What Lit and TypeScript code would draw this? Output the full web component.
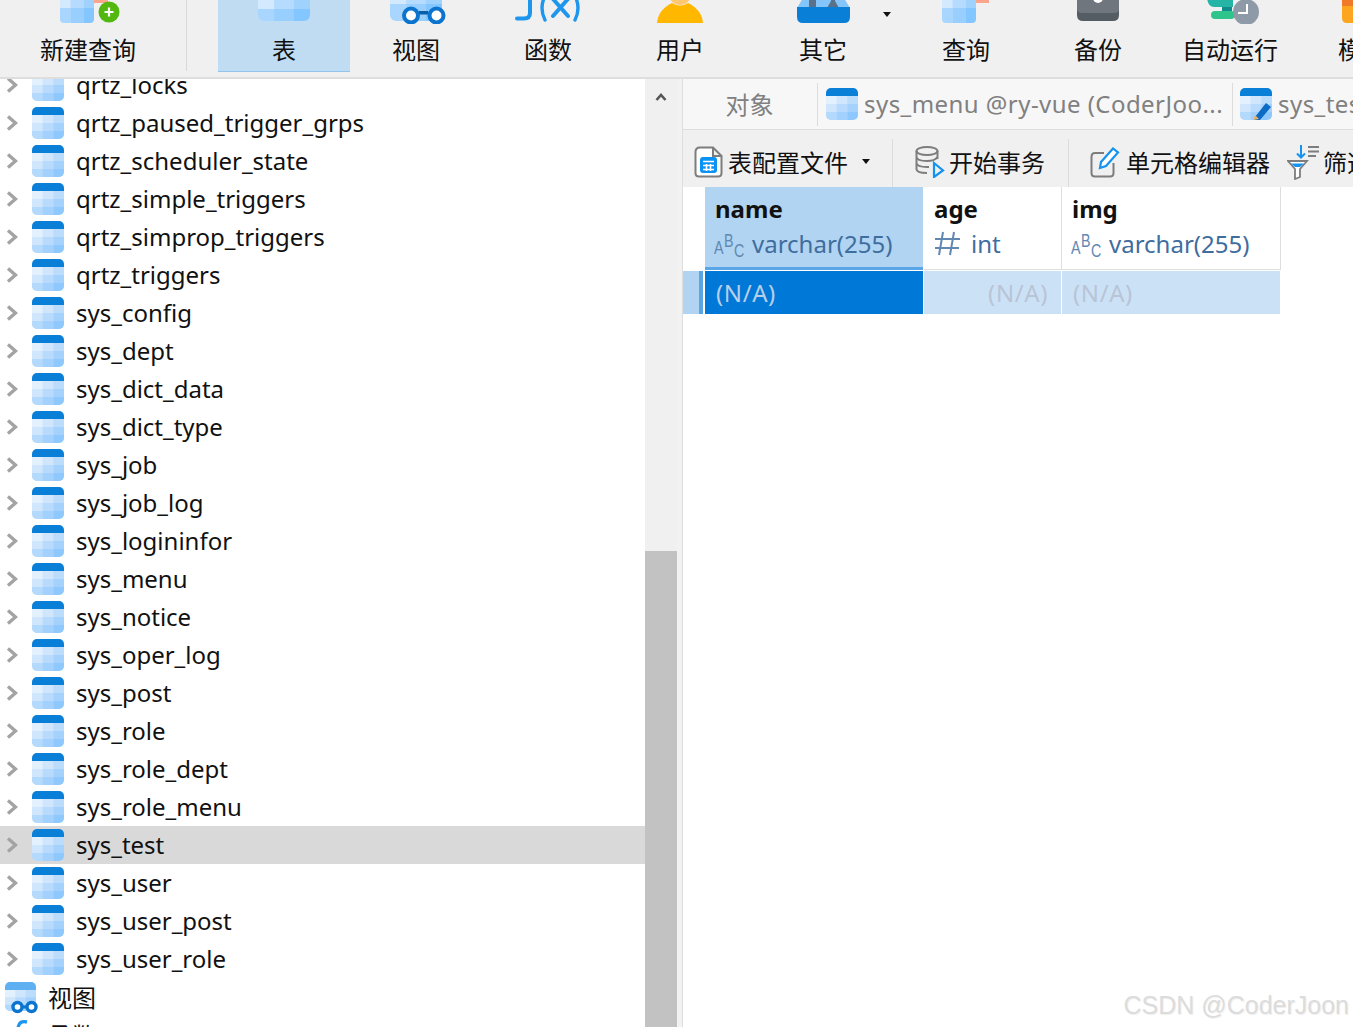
import { LitElement, html, css, svg } from "lit";
import { customElement } from "lit/decorators.js";

const cellColors = ["#e3f0fd", "#cfe6fc", "#bcdcfc", "#cfe6fc", "#b8dbfd", "#a5d2fd", "#b3d9fd", "#a3d1fd", "#8fc8fd"];

const tableCells = (x: number, y: number, w: number, h: number) => {
  const cw = w / 3, ch = h / 3;
  return cellColors.map((c, i) => svg`<rect x=${x + (i % 3) * cw} y=${y + Math.floor(i / 3) * ch} width=${cw + 0.2} height=${ch + 0.2} fill=${c}/>`);
};

let uid = 0;
const tableIcon = (pencil = false) => {
  const id = `c${uid++}`;
  return html`<svg class="ti" width="32" height="32" viewBox="0 0 32 32">
    <defs><clipPath id=${id}><rect width="32" height="32" rx="5"/></clipPath></defs>
    <g clip-path="url(#${id})">
      <rect width="32" height="32" fill="#cfe6fc"/>
      ${tableCells(0, 8, 32, 24)}
      <rect width="32" height="8" fill="#0a7fd8"/>
    </g>
    ${pencil ? svg`<path d="M15 29 L26 15 L31 19 L20 32 L15 32Z" fill="#0a6cc4"/><path d="M13 32 L15 27 L19 31Z" fill="#e8b06a"/>` : ""}
  </svg>`;
};

const viewIcon = () => html`<svg class="ti root-ic" width="36" height="34" viewBox="0 0 36 34">
  <defs><clipPath id="vc"><rect width="31" height="29" rx="5"/></clipPath></defs>
  <g clip-path="url(#vc)"><rect width="31" height="29" fill="#cfe6fc"/>${tableCells(0, 8, 31, 22)}<rect width="31" height="8" fill="#5eb0f0"/></g>
  <circle cx="12.500" cy="25" r="4.500" fill="#fff" stroke="#0a74cf" stroke-width="3.400"/><circle cx="26.500" cy="25" r="4.500" fill="#fff" stroke="#0a74cf" stroke-width="3.400"/>
  <rect x="16" y="23.500" width="7" height="3" fill="#0a74cf"/>
</svg>`;

const twoRow = ["#d3e9fe", "#b5dbfe", "#a0d2fe", "#a9d6fe", "#98cffe", "#84c6ff"];
const block = (id: string, x: number, w: number, split: number, bottom: number, rx = 6) => {
  const a = x + w * 0.31, b = x + w * 0.69;
  const xs = [x, a, b, x + w];
  const ys = [-6, split, bottom];
  return svg`<defs><clipPath id=${id}><rect x=${x} y="-12" width=${w} height=${bottom + 12} rx=${rx}/></clipPath></defs>
    <g clip-path="url(#${id})">${twoRow.map((c, i) => {
      const col = i % 3, r = Math.floor(i / 3);
      return svg`<rect x=${xs[col]} y=${ys[r]} width=${xs[col + 1] - xs[col] + 0.2} height=${ys[r + 1] - ys[r] + 0.2} fill=${c}/>`;
    })}</g>`;
};

const toolIcons: Record<string, unknown> = {
  newq: svg`<rect x="6" y="-2" width="14" height="5" fill="#fba58c"/>
    ${block("t-n", -28, 34, 8, 23, 4)}
    <circle cx="21" cy="12" r="10.500" fill="#52b810"/><path d="M21 7.500v9M16.500 12h9" stroke="#fff" stroke-width="2.200"/>`,
  table: block("t-t", -26, 52, 9, 21),
  view: svg`${block("t-v", -26, 52, 4, 21)}
    <rect x="3" y="11" width="9" height="3.500" fill="#0a5ea8"/>
    <circle cx="-5" cy="15.500" r="7" fill="#fff" stroke="#0a74cf" stroke-width="4"/><circle cx="20.500" cy="15.500" r="7" fill="#fff" stroke="#0a74cf" stroke-width="4"/>`,
  func: svg`<path d="M-18 -4 V13 Q-18 18.500 -24 18.500 H-31" fill="none" stroke="#1e96ee" stroke-width="4" stroke-linecap="round"/>
    <path d="M-3 -4 Q-9 8 -3 20" fill="none" stroke="#1e96ee" stroke-width="3.400" stroke-linecap="round"/>
    <path d="M5 -1 L20 16 M20 -1 L5 16" stroke="#1e96ee" stroke-width="4" stroke-linecap="round"/>
    <path d="M27 -4 Q33 8 27 20" fill="none" stroke="#1e96ee" stroke-width="3.400" stroke-linecap="round"/>`,
  user: svg`<path d="M-23 23 Q-22 10 -8 3 Q0 8 8 3 Q22 10 23 23Z" fill="#ffb700"/><circle cx="0" cy="-6" r="11" fill="#ffc870"/>`,
  other: svg`<path d="M-20 -2 H21 L27 8 H-26Z" fill="#86c5fa"/>
    <rect x="-14" y="-2" width="7" height="10" fill="#5a7189"/><path d="M8 -2 H12 V1 L16 8 H4 L8 1Z" fill="#5a7189"/>
    <path d="M-26 7 H27 V17 Q27 23 21 23 H-20 Q-26 23 -26 17Z" fill="#0a7fd8"/>`,
  query: svg`<rect x="10" y="-2" width="13" height="5" fill="#fba58c"/>${block("t-q", -24, 34, 8, 23, 4)}`,
  backup: svg`<path d="M-21 -2 H21 V15 Q21 21 15 21 H-15 Q-21 21 -21 15Z" fill="#545c64"/><path d="M-21 -2 H21 V9 Q21 13 16 13 H-16 Q-21 13 -21 9Z" fill="#6f767d"/><circle cx="0" cy="-2" r="5" fill="#fff"/>`,
  auto: svg`<path d="M-23 -2 H3 V7 H-16 Q-22 7 -23 -2Z" fill="#25b5a7"/><rect x="-8" y="7" width="10" height="4" fill="#0f8c8c"/><rect x="-19" y="11" width="24" height="8" rx="4" fill="#30c48d"/>
    <circle cx="16" cy="12" r="13" fill="#8e9aa7"/><path d="M17 4 V13 H8" fill="none" stroke="#fff" stroke-width="2"/>`,
  model: svg`<path d="M-20 2 H0 V23 H-15 Q-20 23 -20 18Z" fill="#fda51f"/><rect x="-20" y="-2" width="20" height="8" fill="#f07a2a"/>`,
};

const tools = [
  { k: "newq", t: "新建查询", cls: "w-new" },
  { k: "table", t: "表", cls: "on" },
  { k: "view", t: "视图", cls: "" },
  { k: "func", t: "函数", cls: "" },
  { k: "user", t: "用户", cls: "" },
  { k: "other", t: "其它", cls: "w-other", drop: true },
  { k: "query", t: "查询", cls: "" },
  { k: "backup", t: "备份", cls: "" },
  { k: "auto", t: "自动运行", cls: "" },
  { k: "model", t: "模型", cls: "" },
];

const rows = [
  "qrtz_locks", "qrtz_paused_trigger_grps", "qrtz_scheduler_state", "qrtz_simple_triggers", "qrtz_simprop_triggers",
  "qrtz_triggers", "sys_config", "sys_dept", "sys_dict_data", "sys_dict_type", "sys_job", "sys_job_log", "sys_logininfor",
  "sys_menu", "sys_notice", "sys_oper_log", "sys_post", "sys_role", "sys_role_dept", "sys_role_menu", "sys_test",
  "sys_user", "sys_user_post", "sys_user_role",
];

@customElement("app-root")
export class AppRoot extends LitElement {
  static styles = css`
    :host { display: block; width: 1353px; height: 1027px; overflow: hidden; background: #fff; position: relative;
      font-family: "Noto Sans", "Noto Sans CJK SC", sans-serif; font-size: 24px; color: #111; }
    .top { height: 77px; background: #f0f0f0; border-bottom: 2px solid #dedede; display: flex; overflow: hidden; }
    .tool { width: 132px; flex: none; height: 72px; display: flex; flex-direction: column; align-items: center; position: relative; box-sizing: border-box; }
    .tool svg { display: block; flex: none; }
    .tool .lbl { margin-top: 8px; line-height: 34px; white-space: nowrap; font-family: "Noto Sans CJK SC", sans-serif; }
    .tool.w-new { width: 176px; }
    .tool.w-other { width: 154px; }
    .tool.on { background: #c0dcf2; border-bottom: 1px solid #90c4ef; }
    .sep { width: 1px; height: 71px; background: #d9d9d9; margin: 0 31px 0 10px; flex: none; }
    .drop { position: absolute; left: 137px; top: 12px; width: 0; height: 0; border: 4.500px solid transparent; border-top: 5px solid #111; border-bottom: 0; }
    .main { display: flex; height: 948px; }
    .side { width: 645px; flex: none; overflow: hidden; }
    .list { margin-top: -13px; }
    .row { height: 38px; display: flex; align-items: center; }
    .row.sel { background: #d9d9d9; }
    .chev { width: 12px; height: 18px; margin: 0 14px 0 6px; flex: none; }
    .ti { flex: none; display: block; }
    .root-ic { margin-top: 4px; }
    .name { margin-left: 12px; white-space: nowrap; line-height: 38px; }
    .row.root { padding-left: 5px; }
    .row.root .name { margin-left: 7px; font-family: "Noto Sans CJK SC", sans-serif; }
    .scroll { width: 32px; flex: none; background: #f0f0f0; display: flex; flex-direction: column; align-items: stretch; }
    .scroll svg { margin: 13px 0 0 10px; display: block; }
    .thumb { margin-top: 449px; flex: 1; background: #c2c2c2; }
    .gutter { width: 5px; flex: none; background: #f2f2f2; border-right: 1px solid #dedede; }
    .pane { flex: 1; min-width: 0; display: flex; flex-direction: column; overflow: hidden; }
    .tabs { height: 50px; background: #f7f7f7; border-bottom: 1px solid #dcdcdc; display: flex; align-items: center; flex: none; }
    .tab { height: 43px; display: flex; align-items: center; border-right: 1px solid #dcdcdc; color: #808080; flex: none; white-space: nowrap; overflow: hidden; box-sizing: border-box; }
    .tab span { margin-top: -2px; }
    .tab.obj { width: 135px; justify-content: center; font-family: "Noto Sans CJK SC", sans-serif; padding: 0 1px 2px 0; }
    .tab.menu { width: 415px; padding-left: 8px; gap: 6px; letter-spacing: 0.45px; }
    .tab.test { padding-left: 7px; gap: 6px; border: 0; letter-spacing: 0.45px; }
    .bar { height: 57px; background: #f0f0f0; display: flex; align-items: flex-end; flex: none; white-space: nowrap; font-family: "Noto Sans CJK SC", sans-serif; }
    .bi { height: 48px; display: flex; align-items: center; flex: none; box-sizing: border-box; position: relative; padding-bottom: 3px; }
    .bi span { margin-top: -1px; }
    .b1 { width: 210px; padding-left: 11px; gap: 5px; border-right: 1px solid #dcdcdc; }
    .b2 { width: 176px; padding-left: 22px; gap: 4px; border-right: 1px solid #dcdcdc; }
    .b3 { width: 218px; padding-left: 21px; gap: 5px; }
    .b4 { padding-left: 0; gap: 3px; }
    .b1 i { width: 0; height: 0; border: 4.500px solid transparent; border-top: 5px solid #111; border-bottom: 0; margin-left: 9px; }
    .grid { display: grid; grid-template-columns: 21px 218px 137px 218px; column-gap: 1px; align-content: start; flex: none; background: #fff; width: 597px; }
    .hd { height: 83px; box-sizing: border-box; padding: 4px 0 0 10px; border-bottom: 1px solid #dedede; position: relative; }
    .hd.blank { background: #fff; border-bottom-color: transparent; }
    .hd.sel { background: #b0d4f1; border-bottom: 3px solid #5aa5e6; }
    .hd .n { font-weight: 700; line-height: 36px; font-family: "Noto Sans", sans-serif; }
    .hd .ty { display: flex; align-items: center; height: 32px; color: #3f6d9e; gap: 8px; }
    .hd.sel .ty, .hd.im .ty { margin-left: -1px; }
    .int { margin-left: 2px; }
    .abc { display: flex; width: 30px; color: #6288b2; font-size: 19px; line-height: 20px; letter-spacing: 0; font-family: "Liberation Sans", sans-serif; flex: none; }
    .abc span { display: block; width: 10px; transform: scaleX(0.75); transform-origin: 0 0; }
    .abc span:nth-child(1) { margin-top: 12px; }
    .abc span:nth-child(2) { margin-top: 5px; }
    .abc span:nth-child(3) { margin-top: 15px; }
    .vline { box-shadow: 1px 0 0 #dedede; }
    .cell { height: 43px; margin-top: 1px; box-sizing: border-box; padding: 0 11px; line-height: 43px; background: #cbe2f6; color: #b9c4d6; letter-spacing: 0.6px; }
    .cell.s { background: #0078d7; color: #b7cfe8; }
    .cell.r { text-align: right; padding-right: 13px; }
    .rh { height: 43px; margin-top: 1px; background: linear-gradient(to right, #b0d4f1 16px, #5aa5e6 16px, #5aa5e6 20px, #fff 20px); }
    .mark { position: absolute; right: 4px; bottom: 8px; font-family: "Liberation Sans", sans-serif; font-size: 25px; color: #dcdcdc; text-shadow: 1px 1px 1px #eee; line-height: 28px; }
  `;

  render() {
    uid = 0;
    return html`
      <div class="top">
        ${tools.map((t) => html`
          <div class="tool ${t.cls}">
            <svg width="80" height="24" viewBox="-40 0 80 24">${toolIcons[t.k]}</svg>
            <div class="lbl">${t.t}</div>
            ${t.drop ? html`<span class="drop"></span>` : ""}
          </div>
          ${t.k === "newq" ? html`<div class="sep"></div>` : ""}
        `)}
      </div>
      <div class="main">
        <div class="side">
          <div class="list">
            ${rows.map((r) => html`<div class="row ${r === "sys_test" ? "sel" : ""}">
              <svg class="chev" viewBox="0 0 12 18"><path d="M2 2.500 L9.500 9 L2 15.500" fill="none" stroke="#a3a3a3" stroke-width="3.400"/></svg>
              ${tableIcon()}
              <span class="name">${r}</span>
            </div>`)}
            <div class="row root">${viewIcon()}<span class="name">视图</span></div>
            <div class="row root">
              <svg class="ti" width="36" height="34" viewBox="0 0 36 34"><path d="M22 4 Q14 2 13 10 V30" fill="none" stroke="#1e96ee" stroke-width="3.400"/></svg>
              <span class="name">函数</span>
            </div>
          </div>
        </div>
        <div class="scroll">
          <svg width="12" height="10" viewBox="0 0 12 10"><path d="M1.500 8 L6 3 L10.500 8" fill="none" stroke="#555" stroke-width="2.600"/></svg>
          <div class="thumb"></div>
        </div>
        <div class="gutter"></div>
        <div class="pane">
          <div class="tabs">
            <div class="tab obj">对象</div>
            <div class="tab menu">${tableIcon()}<span>sys_menu @ry-vue (CoderJoo...</span></div>
            <div class="tab test">${tableIcon(true)}<span>sys_test</span></div>
          </div>
          <div class="bar">
            <div class="bi b1">
              <svg width="29" height="32" viewBox="0 0 29 32"><path d="M6 1.500 H19 L27.500 10 V27 Q27.500 30.500 24 30.500 H5 Q1.500 30.500 1.500 27 V6 Q1.500 1.500 6 1.500Z M19 1.500 V10 H27.500" fill="#fff" stroke="#7d7d7d" stroke-width="2"/><rect x="6" y="11" width="17" height="16" rx="3" fill="#0a93f5"/><path d="M9 15.500h11M9 19.500h11M9 23.500h11M12.500 18v7M16.500 18v7" stroke="#fff" stroke-width="1.600"/></svg>
              <span>表配置文件</span><i></i>
            </div>
            <div class="bi b2">
              <svg width="30" height="32" viewBox="0 0 30 32"><g fill="none" stroke="#7d7d7d" stroke-width="2"><ellipse cx="12" cy="5" rx="10.500" ry="4"/><path d="M1.500 5 V23 Q1.500 27 12 27 M22.500 5 V13 M1.500 11 Q2 15 12 15 Q20 15 22.500 11 M1.500 17 Q2 21 12 21 H14"/></g><path d="M19 17 L28 24.500 L19 31Z" fill="none" stroke="#1593ee" stroke-width="2.200"/></svg>
              <span>开始事务</span>
            </div>
            <div class="bi b3">
              <svg width="31" height="32" viewBox="0 0 31 32"><path d="M14 7 H5 Q1.500 7 1.500 11 V27 Q1.500 30.500 5 30.500 H20 Q23.500 30.500 23.500 27 V17" fill="none" stroke="#7d7d7d" stroke-width="2"/><path d="M11 16 L23 2.500 L28 6.500 L16 20 L10 22Z" fill="#fff" stroke="#1593ee" stroke-width="2.200"/></svg>
              <span>单元格编辑器</span>
            </div>
            <div class="bi b4">
              <svg width="33" height="36" viewBox="0 0 33 36"><path d="M14 1 V13 M10 9.500 L14 13.500 L18 9.500" fill="none" stroke="#1593ee" stroke-width="2"/><path d="M21 3 H32 M21 7.500 H32 M21 12 H29" stroke="#7d7d7d" stroke-width="1.800"/><path d="M1 17 H20 L13 25 V33 L8 35 V25Z" fill="#fff" stroke="#7d7d7d" stroke-width="1.800"/><path d="M4 19.500 H17 L13 23 H8Z" fill="#1593ee"/></svg>
              <span>筛选</span>
            </div>
          </div>
          <div class="grid">
            <div class="hd blank"></div>
            <div class="hd sel"><div class="n">name</div><div class="ty"><span class="abc"><span>A</span><span>B</span><span>C</span></span>varchar(255)</div></div>
            <div class="hd vline"><div class="n">age</div><div class="ty"><svg class="ti" width="27" height="26" viewBox="0 0 27 26"><path d="M9 2 L5 25 M20 2 L16 25 M1 9 H26 M1 18 H25" stroke="#6288b2" stroke-width="2" fill="none"/></svg><span class="int">int</span></div></div>
            <div class="hd vline im"><div class="n">img</div><div class="ty"><span class="abc"><span>A</span><span>B</span><span>C</span></span>varchar(255)</div></div>
            <div class="rh"></div>
            <div class="cell s">(N/A)</div>
            <div class="cell r">(N/A)</div>
            <div class="cell">(N/A)</div>
          </div>
        </div>
      </div>
      <div class="mark">CSDN @CoderJoon</div>
    `;
  }
}
